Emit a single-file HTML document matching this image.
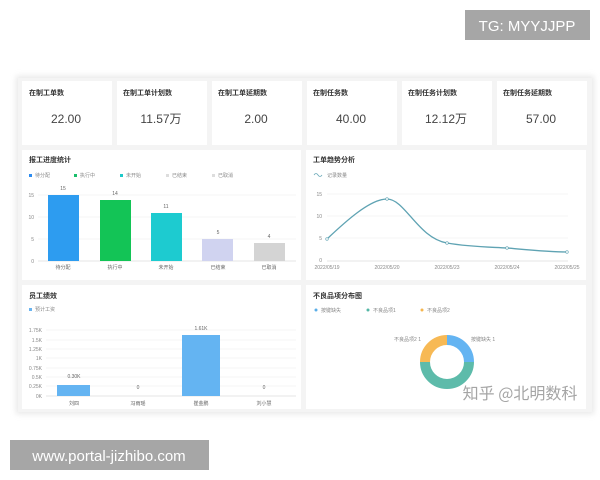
<!DOCTYPE html>
<html><head><meta charset="utf-8"><style>
html,body{margin:0;padding:0;background:#fff;width:600px;height:480px;overflow:hidden}
svg{display:block;font-family:"Liberation Sans","Noto Sans CJK SC",sans-serif}
</style></head><body>
<svg width="600" height="480" viewBox="0 0 600 480">
<defs><filter id="sh" x="-5%" y="-5%" width="110%" height="110%"><feGaussianBlur stdDeviation="3"/></filter></defs>
<rect x="16" y="76" width="578" height="338" fill="#e8e8e8" filter="url(#sh)"/>
<rect x="18" y="78" width="574" height="334" fill="#f4f4f4"/>
<g fill="#fff">
<rect x="22" y="81" width="90" height="64"/><rect x="117" y="81" width="90" height="64"/><rect x="212" y="81" width="90" height="64"/>
<rect x="307" y="81" width="90" height="64"/><rect x="402" y="81" width="90" height="64"/><rect x="497" y="81" width="90" height="64"/>
<rect x="22" y="150" width="279" height="130"/><rect x="306" y="150" width="280" height="130"/>
<rect x="22" y="285" width="279" height="124"/><rect x="306" y="285" width="280" height="124"/>
</g>
<g font-size="7" font-weight="bold" fill="#333">
<text x="29" y="95">在制工单数</text><text x="123" y="95">在制工单计划数</text><text x="218" y="95">在制工单延期数</text>
<text x="313" y="95">在制任务数</text><text x="408" y="95">在制任务计划数</text><text x="503" y="95">在制任务延期数</text>
<text x="29" y="162">报工进度统计</text><text x="313" y="162">工单趋势分析</text>
<text x="29" y="298">员工绩效</text><text x="313" y="298">不良品项分布图</text>
</g>
<g font-size="12" fill="#444" text-anchor="middle">
<text x="66" y="123">22.00</text><text x="161" y="123">11.57万</text><text x="256" y="123">2.00</text>
<text x="351" y="123">40.00</text><text x="446" y="123">12.12万</text><text x="541" y="123">57.00</text>
</g>
<g font-size="5" fill="#888">
<rect x="29" y="174" width="3" height="3" fill="#2d8cf0"/><text x="35" y="177">待分配</text>
<rect x="74" y="174" width="3" height="3" fill="#19be6b"/><text x="80" y="177">执行中</text>
<rect x="120" y="174" width="3" height="3" fill="#1dc9c9"/><text x="126" y="177">未开始</text>
<rect x="166" y="174" width="3" height="3" fill="#ddd"/><text x="172" y="177">已结束</text>
<rect x="212" y="174" width="3" height="3" fill="#ddd"/><text x="218" y="177">已取消</text>
<text x="34" y="197" text-anchor="end">15</text><text x="34" y="219" text-anchor="end">10</text><text x="34" y="241" text-anchor="end">5</text><text x="34" y="263" text-anchor="end">0</text>
</g>
<g stroke="#eee" stroke-width="0.6"><line x1="38" y1="195" x2="296" y2="195"/><line x1="38" y1="217" x2="296" y2="217"/><line x1="38" y1="239" x2="296" y2="239"/></g>
<line x1="38" y1="261" x2="296" y2="261" stroke="#ccc" stroke-width="0.6"/>
<rect x="48" y="195" width="31" height="66" fill="#2d9cf0"/>
<rect x="100" y="200" width="31" height="61" fill="#13c456"/>
<rect x="151" y="213" width="31" height="48" fill="#1dcbd0"/>
<rect x="202" y="239" width="31" height="22" fill="#d0d3f0"/>
<rect x="254" y="243" width="31" height="18" fill="#d4d4d4"/>
<g font-size="5" fill="#666" text-anchor="middle">
<text x="63" y="190">15</text><text x="115" y="195">14</text><text x="166" y="208">11</text><text x="218" y="234">5</text><text x="269" y="238">4</text>
<text x="63" y="269">待分配</text><text x="115" y="269">执行中</text><text x="166" y="269">未开始</text><text x="218" y="269">已结束</text><text x="269" y="269">已取消</text>
</g>
<g font-size="5" fill="#888">
<path d="M314 175 q2 -3 4 0 q2 3 4 0" stroke="#6aa9b8" fill="none" stroke-width="0.8"/><text x="327" y="177">记录数量</text>
<text x="322" y="196" text-anchor="end">15</text><text x="322" y="218" text-anchor="end">10</text><text x="322" y="240" text-anchor="end">5</text><text x="322" y="262" text-anchor="end">0</text>
</g>
<g stroke="#eee" stroke-width="0.6"><line x1="327" y1="194" x2="568" y2="194"/><line x1="327" y1="216" x2="568" y2="216"/><line x1="327" y1="238" x2="568" y2="238"/></g>
<line x1="327" y1="261" x2="568" y2="261" stroke="#ccc" stroke-width="0.6"/>
<path d="M327 239 C345 222 370 199 387 199 C405 199 418 238 447 243 C470 247 490 247 507 248 C530 250 550 252 567 252" stroke="#5fa3b3" stroke-width="1.3" fill="none"/>
<g fill="#fff" stroke="#5fa3b3" stroke-width="0.6"><circle cx="327" cy="239" r="1.3"/><circle cx="387" cy="199" r="1.3"/><circle cx="447" cy="243" r="1.3"/><circle cx="507" cy="248" r="1.3"/><circle cx="567" cy="252" r="1.3"/></g>
<g font-size="5" fill="#888" text-anchor="middle">
<text x="327" y="269">2022/05/19</text><text x="387" y="269">2022/05/20</text><text x="447" y="269">2022/05/23</text><text x="507" y="269">2022/05/24</text><text x="567" y="269">2022/05/25</text>
</g>
<g font-size="5" fill="#888">
<rect x="29" y="308" width="3" height="3" fill="#6ab4f0"/><text x="35" y="311">预计工资</text>
<g text-anchor="end"><text x="42" y="332">1.75K</text><text x="42" y="342">1.5K</text><text x="42" y="351">1.25K</text><text x="42" y="360">1K</text><text x="42" y="370">0.75K</text><text x="42" y="379">0.5K</text><text x="42" y="388">0.25K</text><text x="42" y="398">0K</text></g>
</g>
<g stroke="#eee" stroke-width="0.6"><line x1="46" y1="330" x2="296" y2="330"/><line x1="46" y1="340" x2="296" y2="340"/><line x1="46" y1="349" x2="296" y2="349"/><line x1="46" y1="358" x2="296" y2="358"/><line x1="46" y1="368" x2="296" y2="368"/><line x1="46" y1="377" x2="296" y2="377"/><line x1="46" y1="386" x2="296" y2="386"/></g>
<line x1="46" y1="396" x2="296" y2="396" stroke="#ccc" stroke-width="0.6"/>
<rect x="57" y="385" width="33" height="11" fill="#64b4f2"/>
<rect x="182" y="335" width="38" height="61" fill="#64b4f2"/>
<g font-size="5" fill="#666" text-anchor="middle">
<text x="74" y="378">0.30K</text><text x="138" y="389">0</text><text x="201" y="330">1.61K</text><text x="264" y="389">0</text>
<text x="74" y="405">刘四</text><text x="138" y="405">冯雨瑶</text><text x="201" y="405">崔金鹏</text><text x="264" y="405">刘小慧</text>
</g>
<g font-size="5" fill="#888">
<circle cx="316" cy="310" r="1.5" fill="#5aaee8"/><text x="321" y="312">按键缺失</text>
<circle cx="368" cy="310" r="1.5" fill="#55b7a6"/><text x="373" y="312">不良品项1</text>
<circle cx="422" cy="310" r="1.5" fill="#f5b64f"/><text x="427" y="312">不良品项2</text>
<text x="421" y="341" text-anchor="end">不良品项2  1</text><text x="471" y="341">按键缺失  1</text>
</g>
<g fill="none" stroke-width="10">
<path d="M447 340 A22 22 0 0 1 469 362" stroke="#64b4f2"/>
<path d="M469 362 A22 22 0 0 1 425 362" stroke="#5dbbaa"/>
<path d="M425 362 A22 22 0 0 1 447 340" stroke="#f7b955"/>
</g>
<text x="520" y="399" font-size="16" fill="#a5a5a5" text-anchor="middle" font-family="'Noto Sans CJK SC',sans-serif">知乎 @北明数科</text>
<rect x="465" y="10" width="125" height="30" fill="#a6a6a6"/>
<text x="527" y="31" font-size="15" fill="#fff" text-anchor="middle">TG: MYYJJPP</text>
<rect x="10" y="440" width="199" height="30" fill="#a6a6a6"/>
<text x="109" y="461" font-size="15" fill="#fff" text-anchor="middle">www.portal-jizhibo.com</text>
</svg>
</body></html>
